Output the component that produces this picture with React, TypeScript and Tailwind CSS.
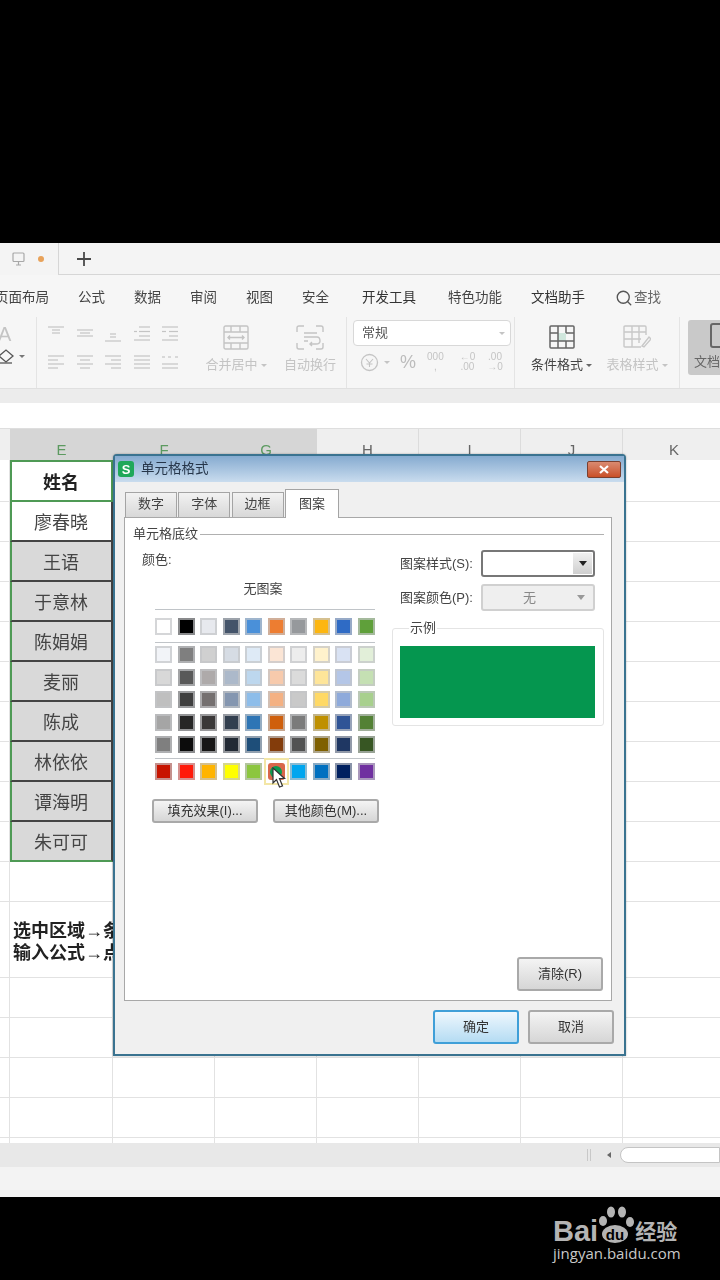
import { Search } from "lucide-react";

const cols = ["E", "F", "G", "H", "I", "J"];
const names = ["廖春晓", "王语", "于意林", "陈娟娟", "麦丽", "陈成", "林依依", "谭海明", "朱可可"];
const rowHeights = [42, 40, 40, 40, 40, 40, 40, 40, 40, 40, 40, 76, 40, 40, 40, 40, 40];

const themeRow = ["#ffffff", "#000000", "#e7e9ee", "#44546a", "#4a90d9", "#ed7d31", "#96999c", "#fdb60f", "#2f6bc5", "#5fa03a"];
const tintRows = [
  "#f2f4f8", "#7f7f7f", "#d0d0d0", "#d6dce4", "#deeaf6", "#fbe5d5", "#ededed", "#fff2cc", "#d9e2f3", "#e2efd9",
  "#d8d8d8", "#595959", "#aeaaaa", "#acb9ca", "#bdd7ee", "#f7caac", "#dbdbdb", "#fee599", "#b4c6e7", "#c5e0b3",
  "#bfbfbf", "#3f3f3f", "#757070", "#8496b0", "#8dbdea", "#f4b183", "#c9c9c9", "#ffd965", "#8eaadb", "#a8d08d",
  "#a5a5a5", "#262626", "#3a3838", "#323f4f", "#2e75b5", "#cf5f0c", "#7b7b7b", "#bf9000", "#2f5496", "#538135",
  "#7f7f7f", "#0c0c0c", "#171616", "#222a35", "#1e4e79", "#833c0b", "#525252", "#7f6000", "#1f3763", "#375623",
];
const standardRow = ["#c81400", "#ff1a0a", "#ffb400", "#ffff00", "#8cc63f", "#d9674a", "#00a6ef", "#0070c0", "#002060", "#7030a0"];

// ribbon alignment glyphs, each line is x1, x2, y
const alignTop: number[][][] = [
  [[0, 16, 1], [4, 12, 4], [4, 12, 7]],
  [[0, 16, 4], [3, 13, 7], [0, 16, 10]],
  [[5, 11, 8], [5, 11, 11], [0, 16, 15]],
  [[5, 16, 1], [5, 16, 5.5], [0, 3, 5.5], [5, 16, 10], [0, 16, 14]],
  [[0, 16, 1], [7, 16, 5.5], [0, 4, 5.5], [7, 16, 10], [0, 16, 14]],
];
const alignBottom: number[][][] = [
  [[0, 16, 1], [0, 10, 5], [0, 16, 9], [0, 10, 13]],
  [[0, 16, 1], [3, 13, 5], [0, 16, 9], [3, 13, 13]],
  [[0, 16, 1], [6, 16, 5], [0, 16, 9], [6, 16, 13]],
  [[0, 16, 1], [0, 16, 5], [0, 16, 9], [0, 16, 13]],
  [[0, 3, 2], [6, 9, 2], [13, 16, 2], [0, 16, 9], [0, 16, 13]],
];

function Lines({ lines }: { lines: number[][] }) {
  return (
    <svg width="17" height="16" viewBox="0 0 17 16" stroke="#c4c4c4" strokeWidth="1.2">
      {lines.map((l, i) => (
        <line key={i} x1={l[0]} x2={l[1]} y1={l[2]} y2={l[2]} />
      ))}
    </svg>
  );
}

function DialogButton({ label, className }: { label: string; className: string }) {
  return (
    <div className={`flex items-center justify-center rounded-[3px] border-2 border-[#a9a9a9] bg-gradient-to-b from-[#f4f4f4] to-[#d6d6d6] text-[13px] text-[#333] ${className}`}>
      {label}
    </div>
  );
}

function Swatch({ color }: { color: string }) {
  return <div className="h-[17px] border-2 border-[#c3c5c8]/70" style={{ backgroundColor: color }} />;
}

function Sheet() {
  return (
    <div className="h-[683px] overflow-hidden bg-white">
      {rowHeights.map((h, r) => {
        const name = names[r - 1];
        let eCell = "";
        if (r === 0) eCell = "border-2 border-[#4f9a55] bg-white font-bold text-[#222]";
        else if (r === 1) eCell = "border-l-2 border-r-2 border-b-2 border-l-[#4f9a55] border-r-[#444] border-b-[#444] bg-white text-[#444]";
        else if (r === 9) eCell = "border-l-2 border-r-2 border-b-2 border-l-[#4f9a55] border-r-[#444] border-b-[#4f9a55] bg-[#d9d9d9] text-[#444]";
        else if (name) eCell = "border-l-2 border-r-2 border-b-2 border-l-[#4f9a55] border-r-[#444] border-b-[#444] bg-[#d9d9d9] text-[#444]";
        else eCell = "border-r border-b border-[#e2e2e2]";
        return (
          <div key={r} className="flex" style={{ height: h }}>
            <div className="w-[10px] shrink-0 border-r border-b border-[#e2e2e2]" />
            <div className={`flex w-[103px] shrink-0 items-center justify-center pr-[1px] pt-[4px] text-[18px] ${eCell}`}>
              {r === 0 ? "姓名" : name}
              {r === 11 && (
                <div className="w-full whitespace-nowrap pl-[3px] text-[18px] font-bold leading-[22px] text-[#222]">
                  <div>选中区域→条件格式</div>
                  <div>输入公式→点击格式</div>
                </div>
              )}
            </div>
            {[0, 1, 2, 3, 4].map((c) => (
              <div key={c} className="w-[102px] shrink-0 border-r border-b border-[#e2e2e2]" />
            ))}
            <div className="flex-1 border-b border-[#e2e2e2]" />
          </div>
        );
      })}
    </div>
  );
}

function Ribbon() {
  return (
    <div className="flex h-[71px] bg-[#f6f6f6] text-[13px]">
      <div className="w-[37px] shrink-0 border-r border-[#e4e4e4] pt-[6px]">
        <div className="-ml-[2px] text-[20px] leading-[22px] text-[#c4c4c4]">A</div>
        <div className="mt-[3px] flex items-center gap-[3px]">
          <svg width="18" height="16" viewBox="0 0 18 16" className="-ml-[2px]" fill="none" stroke="#555" strokeWidth="1.3">
            <path d="M1 8 L8 2 L15 8 L8 14 Z" />
            <path d="M2 15 H14" />
          </svg>
          <div className="border-x-[3px] border-t-[3px] border-x-transparent border-t-[#777]" />
        </div>
      </div>

      <div className="flex w-[310px] shrink-0 border-r border-[#e4e4e4] pl-[11px]">
        <div className="w-[144px] shrink-0 pt-[9px]">
          <div className="flex gap-[11.5px]">
            {alignTop.map((l, i) => <Lines key={i} lines={l} />)}
          </div>
          <div className="mt-[13px] flex gap-[11.5px]">
            {alignBottom.map((l, i) => <Lines key={i} lines={l} />)}
          </div>
        </div>
        <div className="flex w-[88px] shrink-0 flex-col items-center pt-[8px] text-[#c4c4c4]">
          <svg width="26" height="25" viewBox="0 0 26 25" fill="none" stroke="#c4c4c4" strokeWidth="1.4">
            <rect x="1" y="1" width="24" height="23" rx="1.5" />
            <path d="M1 7 H25 M1 18 H25 M8 1 V7 M17 1 V7 M8 18 V24 M17 18 V24 M5 12.5 H21 M7 10.5 L5 12.5 L7 14.5 M19 10.5 L21 12.5 L19 14.5" />
          </svg>
          <div className="mt-[6px] flex items-center gap-[3px] whitespace-nowrap leading-[18px]">
            合并居中
            <span className="border-x-[3px] border-t-[3px] border-x-transparent border-t-[#c4c4c4]" />
          </div>
        </div>
        <div className="flex w-[60px] shrink-0 flex-col items-center pt-[8px] text-[#c4c4c4]">
          <svg width="28" height="25" viewBox="0 0 28 25" fill="none" stroke="#c4c4c4" strokeWidth="1.4">
            <path d="M1 7 V3 Q1 1 3 1 H8 M20 1 H25 Q27 1 27 3 V7 M1 18 V22 Q1 24 3 24 H8 M27 18 V22 Q27 24 25 24 H20 M8 8 H21 M8 12 H21 Q24 12 24 16 Q24 19 20 19 H14 M16 17 L14 19 L16 21 M8 16 H12" />
          </svg>
          <div className="mt-[6px] whitespace-nowrap leading-[18px]">自动换行</div>
        </div>
      </div>

      <div className="w-[168px] shrink-0 border-r border-[#e4e4e4] pl-[6px] pt-[3px]">
        <div className="flex h-[26px] w-[158px] items-center justify-between rounded-[4px] border border-[#d8d8d8] bg-white pl-[8px] pr-[5px] text-[#555]">
          常规
          <span className="border-x-[3px] border-t-[3px] border-x-transparent border-t-[#c4c4c4]" />
        </div>
        <div className="mt-[6px] flex items-center text-[#c4c4c4]">
          <svg width="19" height="19" viewBox="0 0 19 19" fill="none" stroke="#c4c4c4" strokeWidth="1.3" className="ml-[7px]">
            <circle cx="9.5" cy="9.5" r="8" />
            <path d="M6 6 L9.5 10 L13 6 M9.5 10 V14 M6.5 11 H12.5" strokeWidth="1.1" />
          </svg>
          <span className="ml-[5px] border-x-[3px] border-t-[3px] border-x-transparent border-t-[#c4c4c4]" />
          <span className="ml-[10px] text-[18px] leading-[20px] text-[#bcbcbc]">%</span>
          <span className="ml-[11px] text-center text-[10px] leading-[10px]">000<br />,</span>
          <span className="ml-[16px] text-center text-[10px] leading-[10px]">←0<br />.00</span>
          <span className="ml-[12px] text-center text-[10px] leading-[10px]">.00<br />→0</span>
        </div>
      </div>

      <div className="flex w-[165px] shrink-0 border-r border-[#e4e4e4] pl-[6px] pt-[8px]">
        <div className="flex w-[81px] shrink-0 flex-col items-center">
          <svg width="26" height="24" viewBox="0 0 26 24" fill="none" stroke="#666" strokeWidth="1.5">
            <rect x="9" y="8" width="8" height="8" fill="#cfe6dc" stroke="none" />
            <rect x="1" y="1" width="24" height="22" rx="1" />
            <path d="M1 8 H9 M17 8 H25 M9 1 V23 M17 1 V8 M1 16 H17 V23 M17 16 H25" />
          </svg>
          <div className="mt-[7px] flex items-center gap-[3px] whitespace-nowrap leading-[18px] text-[#444]">
            条件格式
            <span className="border-x-[3px] border-t-[3px] border-x-transparent border-t-[#666]" />
          </div>
        </div>
        <div className="flex w-[70px] shrink-0 flex-col items-center text-[#c4c4c4]">
          <svg width="28" height="24" viewBox="0 0 28 24" fill="none" stroke="#c8c8c8" strokeWidth="1.4">
            <path d="M18 22 H2 Q1 22 1 21 V2 Q1 1 2 1 H22 Q23 1 23 2 V10 M1 7 H23 M1 14 H18 M9 1 V22 M16 1 V18" />
            <path d="M19 21 L26 12 L28 14 L21 22 Z" />
          </svg>
          <div className="mt-[7px] flex items-center gap-[3px] whitespace-nowrap leading-[18px]">
            表格样式
            <span className="border-x-[3px] border-t-[3px] border-x-transparent border-t-[#c4c4c4]" />
          </div>
        </div>
      </div>

      <div className="ml-[8px] mt-[3px] h-[55px] w-[40px] rounded-[3px] bg-[#c9c9c9] pl-[6px] pt-[3px] text-[#666]">
        <div className="ml-[16px] h-[25px] w-[20px] rounded-[3px] border-2 border-[#666]" />
        <div className="mt-[5px] whitespace-nowrap leading-[18px]">文档</div>
      </div>
    </div>
  );
}

function Dialog() {
  return (
    <div className="absolute left-[113px] top-[211px] flex h-[602px] w-[513px] flex-col rounded-t-[4px] border-2 border-[#3a7390] bg-[#f0f0f0] text-[13px] text-[#444] shadow-[0_0_2px_rgba(0,0,0,0.35)]">
      <div className="flex h-[26px] shrink-0 items-center justify-between bg-gradient-to-b from-[#86abd0] to-[#c9dcee] pl-[3px] pr-[3px]">
        <div className="flex items-center gap-[7px]">
          <div className="flex h-[16px] w-[16px] items-center justify-center rounded-[3px] bg-[#1fa85a] text-[13px] font-bold leading-none text-white">S</div>
          <span className="text-[13.5px] text-[#26364a]">单元格格式</span>
        </div>
        <div className="flex h-[17px] w-[34px] items-center justify-center rounded-[2px] border border-[#7a4030] bg-gradient-to-b from-[#d98a70] to-[#c94f26]">
          <svg width="10" height="9" viewBox="0 0 10 9" stroke="#fff" strokeWidth="2.2">
            <path d="M1 1 L9 8 M9 1 L1 8" />
          </svg>
        </div>
      </div>

      <div className="mt-[8px] flex h-[27px] shrink-0 items-end pl-[10px]">
        {["数字", "字体", "边框"].map((t) => (
          <div key={t} className="mr-[1.3px] flex h-[25px] w-[52px] items-center justify-center border border-b-0 border-[#a4a4a4] bg-gradient-to-b from-[#f2f2f2] to-[#d8d8d8] pb-[2px]">
            {t}
          </div>
        ))}
        <div className="relative z-10 -mb-px flex h-[29px] w-[54px] items-center justify-center border border-b-0 border-[#a4a4a4] bg-white">图案</div>
      </div>

      <div className="ml-[9px] mr-[12px] flex h-[484px] shrink-0 flex-col border border-[#a8a8a8] bg-white">
        <div className="mt-[6px] flex h-[20px] items-center pl-[8px] pr-[7px]">
          <span>单元格底纹</span>
          <div className="ml-[2px] h-[1px] flex-1 bg-[#b0b0b0]" />
        </div>

        <div className="flex">
          <div className="w-[267px] shrink-0 pl-[30px]">
            <div className="-ml-[13px] mt-[6px] h-[20px] leading-[20px]">颜色:</div>
            <div className="mt-[9px] h-[20px] w-[216px] text-center leading-[20px]">无图案</div>
            <div className="mt-[10px] h-px w-[220px] bg-[#c0c4c8]" />
            <div className="mt-[8px] grid w-[220px] grid-cols-10 gap-x-[5.4px]">
              {themeRow.map((c) => <Swatch key={c} color={c} />)}
            </div>
            <div className="mt-[7px] h-px w-[220px] bg-[#c0c4c8]" />
            <div className="mt-[3px] grid w-[220px] grid-cols-10 gap-x-[5.4px] gap-y-[5.5px]">
              {tintRows.map((c, i) => <Swatch key={i} color={c} />)}
            </div>
            <div className="mt-[5px] h-px w-[220px] bg-[#c0c4c8]" />
            <div className="mt-[4px] grid w-[220px] grid-cols-10 gap-x-[5.4px]">
              {standardRow.map((c, i) =>
                i === 5 ? (
                  <div key={i} className="relative h-[17px]">
                    {/* hovered swatch with the click ripple */}
                    <div className="absolute -inset-x-[4px] -inset-y-[5px] border-2 border-[#f3e6a6]" />
                    <div className="absolute inset-0 flex items-center justify-center rounded-[3px] bg-[#d9674a]">
                      <div className="h-[12px] w-[12px] rounded-full bg-[#0a9a50]" />
                    </div>
                    <svg width="17" height="22" viewBox="0 0 17 22" className="absolute left-[4px] top-[4px] z-10" fill="#fff" stroke="#333" strokeWidth="1.2">
                      <path d="M1 1 V16 L4.5 12.5 L7.5 20 L10.5 19 L7.5 11.5 L12.5 11.5 Z" />
                    </svg>
                  </div>
                ) : (
                  <Swatch key={i} color={c} />
                )
              )}
            </div>
            <div className="-ml-[3px] mt-[19px] flex gap-[15px]">
              <DialogButton label="填充效果(I)..." className="h-[24px] w-[106px]" />
              <DialogButton label="其他颜色(M)..." className="h-[24px] w-[106px]" />
            </div>
          </div>

          <div className="w-[212px] shrink-0 pt-[6px]">
            <div className="flex items-center pl-[8px]">
              <span className="w-[81px] whitespace-nowrap">图案样式(S):</span>
              <div className="flex h-[27px] w-[114px] items-center justify-end rounded-[3px] border-2 border-[#777] bg-white pr-[1px]">
                <div className="flex h-[21px] w-[19px] items-center justify-center bg-gradient-to-b from-[#f0f0f0] to-[#cfcfcf]">
                  <span className="border-x-[4px] border-t-[5px] border-x-transparent border-t-[#222]" />
                </div>
              </div>
            </div>
            <div className="mt-[7px] flex items-center pl-[8px]">
              <span className="w-[81px] whitespace-nowrap">图案颜色(P):</span>
              <div className="flex h-[27px] w-[114px] items-center rounded-[3px] border-2 border-[#d0d0d0] bg-[#efefef] pl-[40px] pr-[8px] text-[#888]">
                <span className="flex-1">无</span>
                <span className="border-x-[4px] border-t-[5px] border-x-transparent border-t-[#999]" />
              </div>
            </div>
            <fieldset className="mt-[8px] rounded-[3px] border border-[#e4e4e4] pb-[7px] pl-[7px] pr-[8px] pt-[9px]">
              <legend className="ml-[9px] px-px text-[13px] leading-[18px]">示例</legend>
              <div className="h-[72px] w-[195px] bg-[#05964f]" />
            </fieldset>
          </div>
        </div>

        <div className="mt-auto flex justify-end pb-[9px] pr-[8px]">
          <DialogButton label="清除(R)" className="h-[34px] w-[86px]" />
        </div>
      </div>

      <div className="mt-[9px] flex justify-end gap-[9px] pr-[10px]">
        <div className="flex h-[34px] w-[86px] items-center justify-center rounded-[3px] border-2 border-[#3f9fd8] bg-gradient-to-b from-[#eef7fd] to-[#b5dcf3] text-[#333]">确定</div>
        <DialogButton label="取消" className="h-[34px] w-[86px]" />
      </div>
    </div>
  );
}

export default function App() {
  return (
    <div className="h-[1280px] w-[720px] overflow-hidden bg-black font-['Liberation_Sans','Noto_Sans_CJK_SC',sans-serif]">
      <div className="h-[243px]" />

      <div className="relative h-[954px] overflow-hidden bg-white blur-[0.4px]">
        {/* tab strip */}
        <div className="flex h-[32px] items-stretch bg-[#f4f4f4]">
          <div className="flex w-[59px] shrink-0 items-center border-r border-[#d6d6d6] pl-[12px]">
            <svg width="13" height="14" viewBox="0 0 13 14" fill="none" stroke="#a8a8a8" strokeWidth="1.2">
              <rect x="1" y="1" width="11" height="8.5" rx="1" />
              <path d="M6.5 10 V13 M4 13 H9" />
            </svg>
            <div className="ml-[13px] h-[6px] w-[6px] rounded-full bg-[#e8a25a]" />
          </div>
          <div className="flex flex-1 items-center border-b border-[#d6d6d6] pl-[18px]">
            <svg width="14" height="14" viewBox="0 0 14 14" stroke="#4a4a4a" strokeWidth="1.8">
              <path d="M7 0 V14 M0 7 H14" />
            </svg>
          </div>
        </div>

        {/* menu row */}
        <div className="flex h-[42px] items-center whitespace-nowrap bg-[#f6f6f6] pt-[4px] text-[13.5px] text-[#444]">
          <span className="-ml-[5px]">页面布局</span>
          <span className="ml-[29px]">公式</span>
          <span className="ml-[29px]">数据</span>
          <span className="ml-[29px]">审阅</span>
          <span className="ml-[29px]">视图</span>
          <span className="ml-[29px]">安全</span>
          <span className="ml-[33px] text-[#333]">开发工具</span>
          <span className="ml-[32px]">特色功能</span>
          <span className="ml-[29px] text-[#333]">文档助手</span>
          <Search size={18} strokeWidth={1.8} className="ml-[30px] text-[#555]" />
          <span className="ml-[1px] text-[#666]">查找</span>
        </div>

        <Ribbon />

        <div className="h-[15px] border-t border-[#e0e0e0] bg-[#ececec]" />
        <div className="h-[25px] bg-white" />

        {/* column headers */}
        <div className="flex h-[32px] border-t border-[#dedede] bg-[#efefef] text-[15px] leading-[42px]">
          <div className="w-[10px] shrink-0" />
          {cols.map((c, i) => (
            <div
              key={c}
              className={i === 0 ? "w-[103px] shrink-0 bg-[#d6d6d6] text-center text-[#5c9a60]" : i < 3 ? "w-[102px] shrink-0 bg-[#d6d6d6] text-center text-[#5c9a60]" : "w-[102px] shrink-0 border-r border-[#dcdcdc] text-center text-[#666]"}
            >
              {c}
            </div>
          ))}
          <div className="flex-1 pl-[5px] text-center text-[#666]">K</div>
        </div>

        <Sheet />

        {/* sheet scrollbar */}
        <div className="flex h-[24px] items-center justify-end bg-[#e8e8e8]">
          <div className="h-[12px] w-[4px] border-x border-[#c8c8c8]" />
          <div className="ml-[16px] border-y-[3px] border-r-[4px] border-y-transparent border-r-[#666]" />
          <div className="ml-[9px] h-[16px] w-[100px] rounded-l-full border border-[#c4c4c4] bg-white" />
        </div>
        <div className="h-[30px] bg-[#f3f3f3]" />

        <Dialog />
      </div>

      {/* watermark */}
      <div className="flex h-[83px] justify-end pr-[40px] pt-[6px] text-[#b4b4b4]">
        <div className="w-[127px]">
          <div className="flex h-[40px] items-end">
            <span className="text-[29px] font-bold leading-[24px]">Bai</span>
            <svg width="38" height="38" viewBox="0 0 38 38" className="-ml-[1px] shrink-0" fill="#b4b4b4">
              <ellipse cx="6" cy="16" rx="4" ry="5" />
              <ellipse cx="14" cy="7" rx="4" ry="5.5" />
              <ellipse cx="25" cy="7" rx="4" ry="5.5" />
              <ellipse cx="33" cy="17" rx="4" ry="5" />
              <ellipse cx="18" cy="29" rx="13" ry="9" />
              <text x="18" y="35" textAnchor="middle" fontSize="15" fontWeight="bold" fill="#000" fontFamily="Liberation Sans">du</text>
            </svg>
            <span className="whitespace-nowrap text-[21px] font-bold leading-[22px]">经验</span>
          </div>
          <div className="whitespace-nowrap font-['Open_Sans',sans-serif] text-[15px] leading-[20px] text-[#c8c8c8]">jingyan.baidu.com</div>
        </div>
      </div>
    </div>
  );
}
